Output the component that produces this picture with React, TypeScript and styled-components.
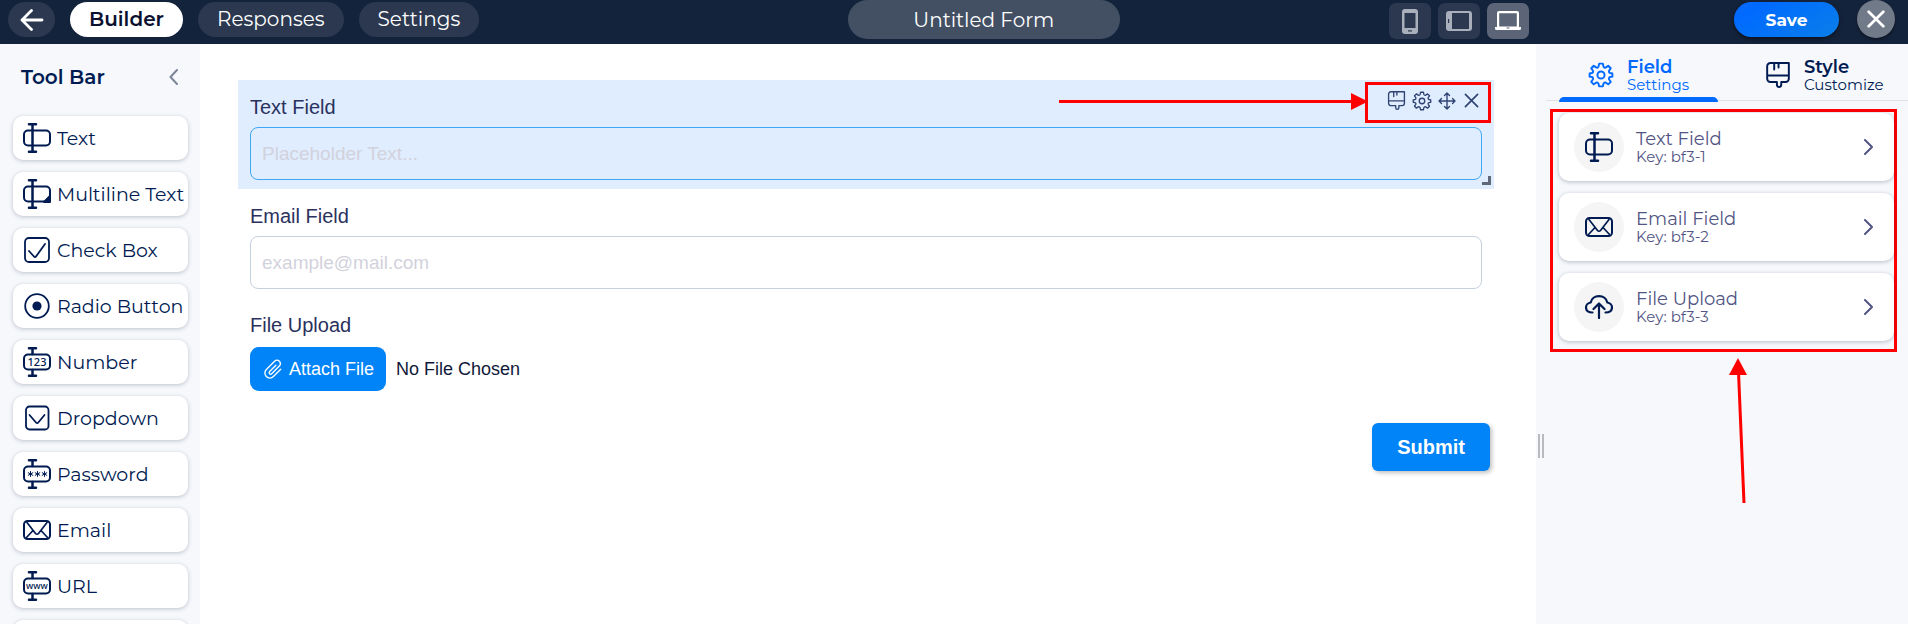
import React, { useRef } from 'react';
import styled, { createGlobalStyle, css } from 'styled-components';

const sans = `Montserrat, Inter, "Open Sans", sans-serif`;
const form = `"Liberation Sans", Arial, sans-serif`;
const navy = '#001b52';
const red = '#ff0000';

const GlobalStyle = createGlobalStyle`
  *, *::before, *::after { box-sizing: border-box; }
  body { margin: 0; font-family: ${sans}; color: ${navy}; background: #fff; }
  button, input { font: inherit; color: inherit; margin: 0; }
  button { cursor: pointer; border: 0; padding: 0; background: none; }
  svg { display: block; flex: none; }
`;

const Shell = styled.div`
  display: flex;
  flex-direction: column;
  height: 100vh;
  overflow: hidden;
`;

/* Header */
const Header = styled.header`
  display: grid;
  grid-template-columns: 39fr 272px 19fr 17fr;
  flex: none;
  height: 44px;
  padding: 0 13px 0 8px;
  background: #14233c;
  color: #fff;
`;
const Nav = styled.nav`
  display: flex;
  align-items: flex-start;
  gap: 15px;
  padding-top: 2px;
`;
const Pill = styled.a<{ $active?: boolean }>`
  display: flex;
  align-items: center;
  justify-content: center;
  height: 35px;
  padding: 0 19px 2px;
  border-radius: 18px;
  font-size: 20px;
  line-height: 24px;
  text-decoration: none;
  color: #fff;
  background: #2b384f;
  ${p => p.$active && css`
    color: #0b1030;
    background: #fff;
    font-weight: 600;
  `}
`;
const BackButton = styled.button`
  display: flex;
  align-items: center;
  justify-content: center;
  width: 47px;
  height: 35px;
  border-radius: 18px;
  background: #2b384f;
`;
const TitleInput = styled.input`
  width: 100%;
  height: 39px;
  border: 0;
  border-radius: 20px;
  background: #434f63;
  text-align: center;
  font-size: 20px;
  outline: none;
`;
const Devices = styled.div`
  display: flex;
  justify-content: flex-end;
  gap: 7px;
  padding-top: 3px;
`;
const DeviceButton = styled.button<{ $active?: boolean }>`
  display: flex;
  align-items: center;
  justify-content: center;
  width: 42px;
  height: 36px;
  border-radius: 7px;
  background: ${p => (p.$active ? '#5b6577' : '#2b384f')};
  color: ${p => (p.$active ? '#fff' : '#a9b0bc')};
`;
const Actions = styled.div`
  display: flex;
  justify-content: flex-end;
  gap: 18px;
`;
const SaveButton = styled.button`
  width: 105px;
  height: 35px;
  margin-top: 2px;
  border-radius: 18px;
  background: linear-gradient(150deg, #006aff 20%, #0a7fe8);
  box-shadow: 0 2px 4px rgba(0, 0, 0, 0.5);
  font-size: 17px;
  font-weight: 700;
`;
const CloseButton = styled.button`
  display: flex;
  align-items: center;
  justify-content: center;
  width: 38px;
  height: 38px;
  border-radius: 50%;
  background: #717a89;
  box-shadow: 0 2px 3px rgba(0, 0, 0, 0.4);
`;

/* Body */
const Body = styled.div`
  display: flex;
  flex: 1;
  min-height: 0;
`;
const Sidebar = styled.aside`
  flex: none;
  width: 200px;
  padding: 20px 12px 0 13px;
  overflow: hidden;
  background: #f6f8fc;
`;
const SidebarHead = styled.div`
  display: flex;
  align-items: center;
  justify-content: space-between;
  height: 26px;
  margin-bottom: 26px;
  padding: 0 10px 0 8px;
`;
const SidebarTitle = styled.h2`
  margin: 0;
  font-size: 20px;
  line-height: 24px;
  font-weight: 600;
`;
const CollapseButton = styled.button`
  color: #7d8698;
`;
const ToolList = styled.div`
  display: flex;
  flex-direction: column;
  gap: 12px;
`;
const ToolButton = styled.button`
  display: flex;
  align-items: center;
  gap: 6px;
  flex: none;
  height: 44px;
  padding: 0 0 0 10px;
  border-radius: 10px;
  background: #fff;
  box-shadow: 0 1px 4px rgba(20, 35, 60, 0.25);
  font-size: 19px;
  white-space: nowrap;
`;

const Canvas = styled.main`
  flex: 1;
  min-width: 0;
  padding: 36px 42px 0 38px;
  font-family: ${form};
`;
const Field = styled.div<{ $selected?: boolean }>`
  position: relative;
  padding: 15px 12px 9px;
  background: ${p => (p.$selected ? '#e0edff' : 'transparent')};
`;
const FieldLabel = styled.label`
  display: block;
  margin-bottom: 8px;
  font-size: 20px;
  line-height: 24px;
  color: #2a315d;
`;
const FieldInput = styled.input<{ $selected?: boolean }>`
  display: block;
  width: 100%;
  height: 53px;
  padding: 0 11px;
  border: 1px solid ${p => (p.$selected ? '#3ea8f5' : '#c6d1de')};
  border-radius: 8px;
  background: transparent;
  font-size: 19px;
  outline: none;
  &::placeholder { color: #d2d2dc; opacity: 1; }
`;
const FieldTools = styled.div`
  position: absolute;
  top: 2px;
  right: 3px;
  display: flex;
  align-items: flex-start;
  justify-content: flex-end;
  gap: 6px;
  width: 126px;
  height: 41px;
  padding: 6px 7px 0 0;
  border: 3px solid ${red};
`;
const FieldTool = styled.button`
  display: flex;
  width: 19px;
  height: 19px;
  align-items: center;
  justify-content: center;
  color: #2f4373;
`;
const ResizeCorner = styled.span`
  position: absolute;
  right: 3px;
  bottom: 4px;
  width: 9px;
  height: 9px;
  border: solid #5f6878;
  border-width: 0 3px 3px 0;
`;
const HorizontalArrow = styled.svg`
  position: absolute;
  top: 13px;
  right: 126px;
`;
const FileRow = styled.div`
  display: flex;
  align-items: center;
  gap: 10px;
  padding-top: 2px;
  font-size: 18px;
  color: #10183a;
`;
const AttachButton = styled.button`
  display: flex;
  align-items: center;
  gap: 6px;
  height: 44px;
  padding: 0 12px 0 13px;
  border-radius: 9px;
  background: #0084f8;
  color: #fff;
`;
const SubmitRow = styled.div`
  display: flex;
  justify-content: flex-end;
  padding: 23px 4px 0;
`;
const SubmitButton = styled.button`
  height: 48px;
  padding: 0 25px;
  border-radius: 6px;
  background: #0084f8;
  box-shadow: 2px 2px 4px rgba(0, 0, 0, 0.25);
  color: #fff;
  font-size: 20px;
  font-weight: 700;
`;

const Panel = styled.aside`
  position: relative;
  flex: none;
  width: 372px;
  background: #f6f8fc;
`;
const Grip = styled.span`
  position: absolute;
  top: 390px;
  left: 2px;
  width: 6px;
  height: 24px;
  border: solid #b9b9bf;
  border-width: 0 2px;
`;
const Tabs = styled.div`
  display: flex;
  height: 57px;
  margin-left: 10px;
  border-bottom: 1px solid #dfe1e5;
`;
const Tab = styled.button<{ $active?: boolean }>`
  position: relative;
  display: flex;
  align-items: center;
  gap: 13px;
  width: ${p => (p.$active ? '177px' : '185px')};
  padding: 6px 0 0 42px;
  text-align: left;
  color: ${p => (p.$active ? '#006aff' : navy)};
  ${p => p.$active && css`
    &::after {
      content: '';
      position: absolute;
      left: 13px;
      right: 5px;
      bottom: -2px;
      height: 5px;
      border-radius: 5px 5px 0 0;
      background: #006aff;
    }
  `}
`;
const TabText = styled.span`
  display: flex;
  flex-direction: column;
  font-size: 15px;
  line-height: 16px;
`;
const TabTitle = styled.strong`
  font-size: 18px;
  line-height: 20px;
  font-weight: 600;
`;
const CardFrame = styled.div`
  position: relative;
  margin: 8px 11px 0 14px;
  padding: 1px 0 8px 6px;
  border: 3px solid ${red};
`;
const CardList = styled.div`
  display: flex;
  flex-direction: column;
  gap: 12px;
`;
const Card = styled.button`
  display: flex;
  align-items: center;
  width: 100%;
  height: 68px;
  padding: 0 21px 0 15px;
  border-radius: 10px;
  background: #fff;
  box-shadow: 0 1px 4px rgba(20, 35, 60, 0.28);
  text-align: left;
  color: #525583;
`;
const CardIcon = styled.span`
  display: flex;
  align-items: center;
  justify-content: center;
  width: 50px;
  height: 50px;
  margin-right: 12px;
  border-radius: 50%;
  background: #f5f5f5;
  color: ${navy};
`;
const CardText = styled.span`
  display: flex;
  flex: 1;
  flex-direction: column;
  font-size: 15px;
  line-height: 16px;
`;
const CardTitle = styled.span`
  font-size: 18px;
  line-height: 20px;
`;
const VerticalArrow = styled.svg`
  position: absolute;
  top: 100%;
  left: 176px;
  margin-top: 9px;
`;

/* Icons */
const line = { fill: 'none', stroke: 'currentColor', strokeLinecap: 'round', strokeLinejoin: 'round' } as const;

const FieldIcon = ({ inner }: { inner?: 'corner' | '123' | '***' | 'www' }) => (
  <svg width="28" height="30" viewBox="0 0 28 30" {...line} strokeWidth="2" aria-hidden="true">
    <rect x="1" y="7.5" width="26" height="15" rx="4" />
    {inner === '123' || inner === '***' || inner === 'www' ? (
      <path d="M6 1.200h7M9.500 1.500v5.500M6 28.800h7M9.500 28.500v-5.500" strokeWidth="2.500" />
    ) : (
      <path d="M6 1.200h7M9.500 1.500v27M6 28.800h7" strokeWidth="2.500" />
    )}
    {inner === 'corner' && <path d="M27 17v6h-6z" fill="currentColor" />}
    {inner === '123' && (
      <text x="14" y="19" textAnchor="middle" fill="currentColor" stroke="none" fontFamily="Noto Sans, sans-serif" fontWeight="500" fontSize="11">123</text>
    )}
    {inner === 'www' && (
      <text x="14" y="18" textAnchor="middle" fill="currentColor" stroke="none" fontFamily="Noto Sans, sans-serif" fontWeight="500" fontSize="9">www</text>
    )}
    {inner === '***' && (
      <path strokeWidth="1" d="M7.500 12.500v5M5.200 13.700l4.600 2.600M5.200 16.300l4.600-2.600M14.500 12.500v5M12.200 13.700l4.600 2.600M12.200 16.300l4.600-2.600M21.500 12.500v5M19.200 13.700l4.600 2.600M19.200 16.300l4.600-2.600" />
    )}
  </svg>
);
const CheckIcon = () => (
  <svg width="28" height="26" viewBox="0 0 28 26" {...line} strokeWidth="1.800" aria-hidden="true">
    <rect x="2" y="1" width="24" height="24" rx="4" />
    <path d="M6 14l5 5.500a1.500 1.500 0 0 0 2 0L22 7" />
  </svg>
);
const RadioIcon = () => (
  <svg width="28" height="26" viewBox="0 0 28 26" {...line} strokeWidth="1.800" aria-hidden="true">
    <circle cx="14" cy="13" r="11.800" />
    <circle cx="14" cy="13" r="4.600" fill="currentColor" stroke="none" />
  </svg>
);
const DropdownIcon = () => (
  <svg width="28" height="26" viewBox="0 0 28 26" {...line} strokeWidth="1.800" aria-hidden="true">
    <rect x="3" y="1.500" width="22.500" height="23" rx="3.500" />
    <path d="M6.500 10l6.500 7.500a1.500 1.500 0 0 0 2.300 0L21.500 10" />
  </svg>
);
const MailIcon = () => (
  <svg width="28" height="20" viewBox="0 0 28 20" {...line} strokeWidth="2" aria-hidden="true">
    <rect x="1" y="1" width="26" height="18" rx="3.500" />
    <path d="M4 2.500l8.500 11a2 2 0 0 0 3 0L24 2.500M3.500 17.500L10 10.500M24.500 17.500L18 10.500" strokeWidth="1.700" />
  </svg>
);
const UploadIcon = () => (
  <svg width="28" height="24" viewBox="0 0 28 24" {...line} strokeWidth="2.200" aria-hidden="true">
    <path d="M7.500 17.500C3.500 17.500 1 15.500 1 12.500 1 10 3 7.800 5.700 7.500 6.500 3.800 9.800 1.200 14 1.200s7.500 2.600 8.300 6.300C25 7.800 27 10 27 12.500c0 3-2.500 5-6.500 5M14 23V9M8.500 14l5.500-5.500 5.500 5.500" />
  </svg>
);
const Chevron = ({ left }: { left?: boolean }) => (
  <svg width="9" height="16" viewBox="0 0 9 16" {...line} strokeWidth="2" aria-hidden="true">
    <path d={left ? 'M8 1L1.500 8 8 15' : 'M1 1l7 7-7 7'} />
  </svg>
);
const BrushIcon = ({ size, weight }: { size: number; weight: number }) => (
  <svg width={size} height={size} viewBox="0 0 24 24" {...line} strokeWidth={weight} aria-hidden="true">
    <path d="M5 1h17v14.500a3 3 0 0 1-3 3h-4V21a2 2 0 0 1-4 0v-2.500H5a3 3 0 0 1-3-3V4a3 3 0 0 1 3-3zM2 12.500h20M8.500 1v6M12.500 1v4" />
  </svg>
);
const GearIcon = ({ size, weight }: { size: number; weight: number }) => (
  <svg width={size} height={size} viewBox="0 0 24 24" {...line} strokeWidth={weight} aria-hidden="true">
    <circle cx="12" cy="12" r="3.300" />
    <path d="M10.300 1.500h3.400l.6 2.600a1.500 1.500 0 0 0 2.200.9l2.200-1.500 2.300 2.300L19.500 8a1.500 1.500 0 0 0 .9 2.200l2.100.4v2.900l-2.100.4a1.500 1.500 0 0 0-.9 2.200l1.500 2.200-2.300 2.300-2.200-1.500a1.500 1.500 0 0 0-2.200.9l-.6 2.500h-3.400l-.6-2.500a1.500 1.500 0 0 0-2.200-.9l-2.200 1.500L3 18.300l1.500-2.200a1.500 1.500 0 0 0-.9-2.200l-2.100-.4v-2.900l2.100-.4A1.500 1.500 0 0 0 4.500 8L3 5.800l2.300-2.300L7.500 5a1.500 1.500 0 0 0 2.200-.9z" />
  </svg>
);
const MoveIcon = () => (
  <svg width="18" height="18" viewBox="0 0 18 18" {...line} strokeWidth="1.400" aria-hidden="true">
    <path d="M9 1v16M1 9h16M6.500 3.500L9 1l2.500 2.500M6.500 14.500L9 17l2.500-2.500M3.500 6.500L1 9l2.500 2.500M14.500 6.500L17 9l-2.500 2.500" />
  </svg>
);
const CrossIcon = ({ size, weight }: { size: number; weight: number }) => (
  <svg width={size} height={size} viewBox="0 0 16 16" {...line} strokeWidth={weight} aria-hidden="true">
    <path d="M1.500 1.500l13 13M14.500 1.500l-13 13" />
  </svg>
);
const ClipIcon = () => (
  <svg width="20" height="20" viewBox="0 0 24 24" {...line} strokeWidth="1.600" aria-hidden="true">
    <path d="M15.500 7.500l-7.600 7.600a1.700 1.700 0 0 0 2.500 2.500l9.200-9.200a4 4 0 0 0-5.700-5.700L4 12.600a6 6 0 0 0 8.500 8.500l8.800-8.800" />
  </svg>
);
const BackIcon = () => (
  <svg width="24" height="22" viewBox="0 0 24 22" {...line} strokeWidth="2.800" aria-hidden="true">
    <path d="M22 11H2M11.500 1.500L2 11l9.500 9.500" />
  </svg>
);
const PhoneIcon = () => (
  <svg width="16" height="25" viewBox="0 0 16 25" aria-hidden="true">
    <path fill="currentColor" fillRule="evenodd" d="M3 0h10a3 3 0 0 1 3 3v19a3 3 0 0 1-3 3H3a3 3 0 0 1-3-3V3a3 3 0 0 1 3-3zm-.5 4v15h11V4zM6 21.300v1.200h4v-1.200z" />
  </svg>
);
const TabletIcon = () => (
  <svg width="26" height="20" viewBox="0 0 26 20" aria-hidden="true">
    <path fill="currentColor" fillRule="evenodd" d="M3 0h20a3 3 0 0 1 3 3v14a3 3 0 0 1-3 3H3a3 3 0 0 1-3-3V3a3 3 0 0 1 3-3zm3 2v16h17V2zM2 8v4h1.200V8z" />
  </svg>
);
const LaptopIcon = () => (
  <svg width="26" height="20" viewBox="0 0 26 20" aria-hidden="true">
    <path fill="currentColor" fillRule="evenodd" d="M4 0h18a2 2 0 0 1 2 2v14h2v1.500a1.500 1.500 0 0 1-1.500 1.500h-23A1.500 1.500 0 0 1 0 17.500V16h2V2a2 2 0 0 1 2-2zm.2 2.200V15.500h17.600V2.200zM11.500 16.500v1h3v-1z" />
  </svg>
);

const tools = [
  { name: 'Text', icon: <FieldIcon /> },
  { name: 'Multiline Text', icon: <FieldIcon inner="corner" /> },
  { name: 'Check Box', icon: <CheckIcon /> },
  { name: 'Radio Button', icon: <RadioIcon /> },
  { name: 'Number', icon: <FieldIcon inner="123" /> },
  { name: 'Dropdown', icon: <DropdownIcon /> },
  { name: 'Password', icon: <FieldIcon inner="***" /> },
  { name: 'Email', icon: <MailIcon /> },
  { name: 'URL', icon: <FieldIcon inner="www" /> },
];

const cards = [
  { name: 'Text Field', id: 'bf3-1', icon: <FieldIcon /> },
  { name: 'Email Field', id: 'bf3-2', icon: <MailIcon /> },
  { name: 'File Upload', id: 'bf3-3', icon: <UploadIcon /> },
];

export default function App() {
  const fileInput = useRef<HTMLInputElement>(null);

  return (
    <Shell>
      <GlobalStyle />
      <Header>
        <Nav>
          <BackButton aria-label="Back"><BackIcon /></BackButton>
          <Pill href="#builder" $active>Builder</Pill>
          <Pill href="#responses">Responses</Pill>
          <Pill href="#settings">Settings</Pill>
        </Nav>
        <TitleInput aria-label="Form name" defaultValue="Untitled Form" />
        <Devices>
          <DeviceButton aria-label="Phone view"><PhoneIcon /></DeviceButton>
          <DeviceButton aria-label="Tablet view"><TabletIcon /></DeviceButton>
          <DeviceButton aria-label="Laptop view" $active><LaptopIcon /></DeviceButton>
        </Devices>
        <Actions>
          <SaveButton>Save</SaveButton>
          <CloseButton aria-label="Close"><CrossIcon size={18} weight={2.4} /></CloseButton>
        </Actions>
      </Header>

      <Body>
        <Sidebar>
          <SidebarHead>
            <SidebarTitle>Tool Bar</SidebarTitle>
            <CollapseButton aria-label="Collapse tool bar"><Chevron left /></CollapseButton>
          </SidebarHead>
          <ToolList>
            {tools.map(t => (
              <ToolButton key={t.name}>{t.icon}{t.name}</ToolButton>
            ))}
            <ToolButton aria-label="More fields" />
          </ToolList>
        </Sidebar>

        <Canvas>
          <Field $selected>
            <FieldLabel htmlFor="text-field">Text Field</FieldLabel>
            <FieldInput id="text-field" placeholder="Placeholder Text..." $selected />
            <FieldTools>
              <FieldTool aria-label="Style"><BrushIcon size={19} weight={1.7} /></FieldTool>
              <FieldTool aria-label="Settings"><GearIcon size={20} weight={1.6} /></FieldTool>
              <FieldTool aria-label="Move"><MoveIcon /></FieldTool>
              <FieldTool aria-label="Remove"><CrossIcon size={15} weight={1.8} /></FieldTool>
            </FieldTools>
            <HorizontalArrow width="309" height="17" viewBox="0 0 309 17" aria-hidden="true">
              <path d="M0 8.500h295" stroke={red} strokeWidth="3" />
              <path d="M292 0l17 8.500-17 8.500z" fill={red} />
            </HorizontalArrow>
            <ResizeCorner />
          </Field>
          <Field>
            <FieldLabel htmlFor="email-field">Email Field</FieldLabel>
            <FieldInput id="email-field" type="email" placeholder="example@mail.com" />
          </Field>
          <Field>
            <FieldLabel htmlFor="file-field">File Upload</FieldLabel>
            <FileRow>
              <input id="file-field" type="file" hidden ref={fileInput} />
              <AttachButton onClick={() => fileInput.current?.click()}><ClipIcon />Attach File</AttachButton>
              <span>No File Chosen</span>
            </FileRow>
          </Field>
          <SubmitRow><SubmitButton>Submit</SubmitButton></SubmitRow>
        </Canvas>

        <Panel>
          <Grip />
          <Tabs role="tablist">
            <Tab role="tab" aria-selected="true" $active>
              <GearIcon size={26} weight={1.8} />
              <TabText><TabTitle>Field</TabTitle>Settings</TabText>
            </Tab>
            <Tab role="tab" aria-selected="false">
              <BrushIcon size={26} weight={1.8} />
              <TabText><TabTitle>Style</TabTitle>Customize</TabText>
            </Tab>
          </Tabs>
          <CardFrame>
            <CardList>
              {cards.map(c => (
                <Card key={c.id}>
                  <CardIcon>{c.icon}</CardIcon>
                  <CardText><CardTitle>{c.name}</CardTitle>Key: {c.id}</CardText>
                  <Chevron />
                </Card>
              ))}
            </CardList>
            <VerticalArrow width="18" height="145" viewBox="0 0 18 145" aria-hidden="true">
              <path d="M9.500 14L15 145" stroke={red} strokeWidth="3" />
              <path d="M9 0L0 17h18z" fill={red} />
            </VerticalArrow>
          </CardFrame>
        </Panel>
      </Body>
    </Shell>
  );
}
